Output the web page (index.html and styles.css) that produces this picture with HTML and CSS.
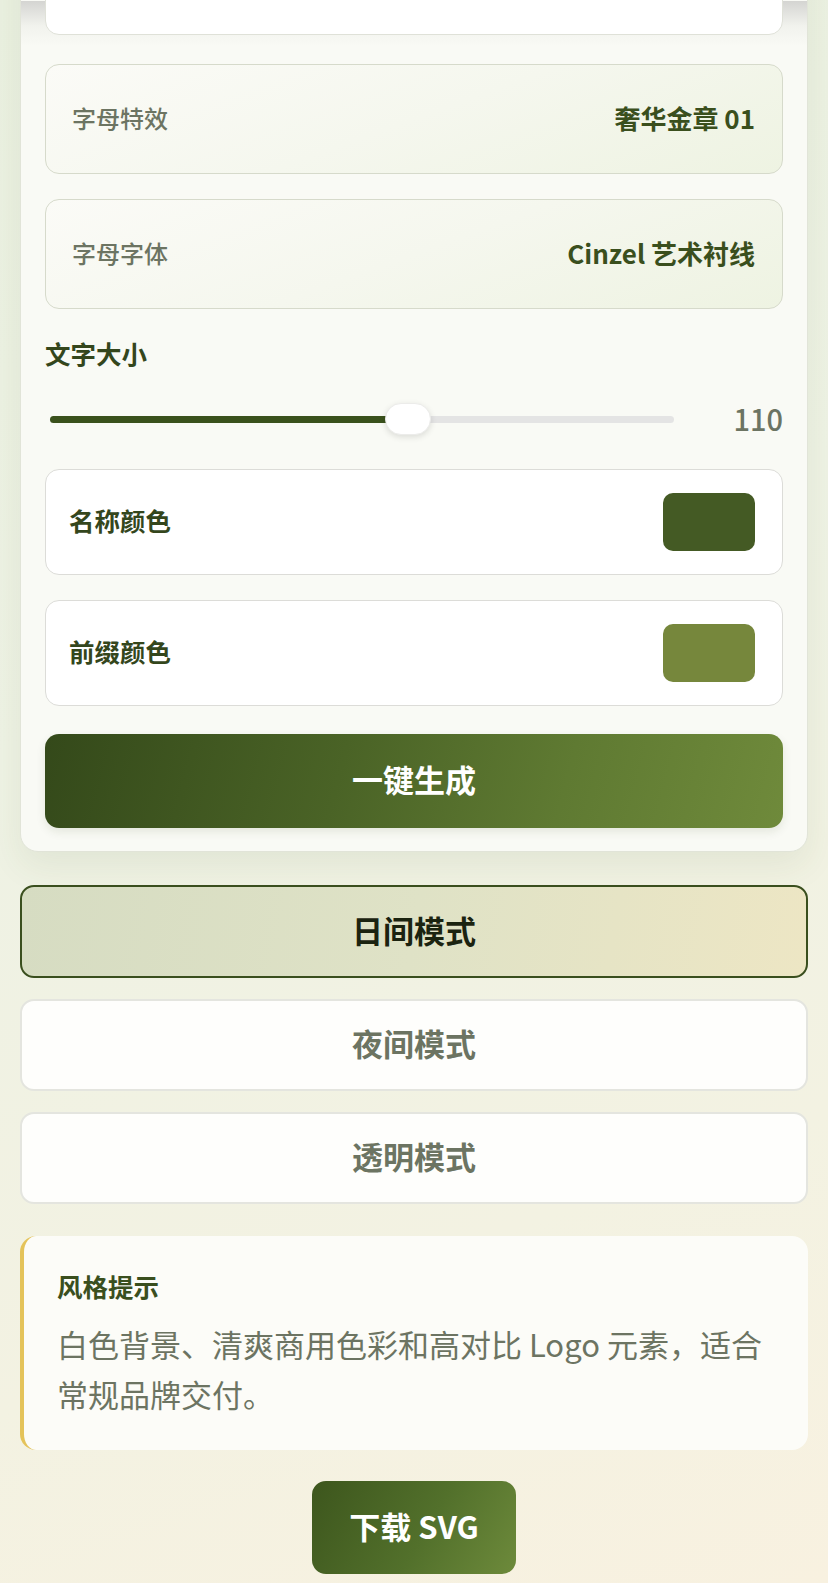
FILE: index.html
```html
<!DOCTYPE html>
<html lang="zh-CN">
<head>
<meta charset="utf-8">
<title>Logo 生成器</title>
<link rel="stylesheet" href="styles.css">
</head>
<body>
<main class="page">
  <section class="panel">
    <div class="field field-plain field-top"></div>
    <div class="field field-tint gap-29">
      <span class="field-label">字母特效</span>
      <span class="field-value">奢华金章 01</span>
    </div>
    <div class="field field-tint gap-25">
      <span class="field-label">字母字体</span>
      <span class="field-value">Cinzel 艺术衬线</span>
    </div>
    <div class="size-label">文字大小</div>
    <div class="slider-row">
      <div class="slider">
        <div class="slider-track"></div>
        <div class="slider-fill" style="width: 57.3%"></div>
        <div class="slider-thumb" style="left: 57.3%"></div>
      </div>
      <span class="slider-value">110</span>
    </div>
    <div class="color-row gap-30">
      <span class="color-label">名称颜色</span>
      <span class="swatch swatch-dark"></span>
    </div>
    <div class="color-row gap-25">
      <span class="color-label">前缀颜色</span>
      <span class="swatch swatch-light"></span>
    </div>
    <button class="generate">一键生成</button>
  </section>

  <div class="modes">
    <button class="mode mode-active">日间模式</button>
    <button class="mode">夜间模式</button>
    <button class="mode">透明模式</button>
  </div>

  <aside class="hint">
    <h3 class="hint-title">风格提示</h3>
    <p class="hint-text">白色背景、清爽商用色彩和高对比 Logo 元素，适合常规品牌交付。</p>
  </aside>

  <div class="download-wrap">
    <button class="download">下载 SVG</button>
  </div>
</main>
</body>
</html>
```

FILE: styles.css
```css
* { box-sizing: border-box; }

html, body {
  margin: 0;
  padding: 0;
}

body {
  width: 828px;
  height: 1583px;
  overflow: hidden;
  font-family: "Noto Sans CJK SC", "Noto Sans", sans-serif;
  background: linear-gradient(160deg, #eaf0e0 0%, #eef2e4 40%, #f3f2e2 75%, #f8f1e0 100%);
}

.page {
  padding: 0 20px;
  display: flex;
  flex-direction: column;
}

.panel {
  margin-top: -100px;
  background:
    linear-gradient(to bottom, rgba(255,255,255,0) 0px, rgba(255,255,255,0) 100px, rgba(200,200,198,0.75) 100px, rgba(230,231,226,0.4) 125px, rgba(255,255,255,0) 145px),
    #f9faf5;
  border: 1px solid #e1e4d8;
  border-radius: 18px;
  padding: 24px 24px 23px;
  display: flex;
  flex-direction: column;
  box-shadow: 0 14px 34px rgba(70, 90, 40, 0.08);
}

.gap-25 { margin-top: 25px; }
.gap-29 { margin-top: 29px; }
.gap-30 { margin-top: 30px; }

.field {
  height: 110px;
  border-radius: 14px;
  border: 1.5px solid #d6dacb;
  display: flex;
  align-items: center;
  justify-content: space-between;
  padding: 0 27px 4px 26px;
}

.field-plain {
  background: #ffffff;
  border-color: #dfe1d8;
}

.field-tint {
  background: linear-gradient(160deg, #fbfbf7 0%, #f5f7ee 50%, #eef3e2 100%);
}

.field-label {
  font-size: 24px;
  color: #6c7462;
  font-weight: 500;
}

.field-value {
  font-size: 26px;
  font-weight: 600;
  color: #3a4f1d;
}

.size-label {
  margin-top: 27px;
  font-size: 25.5px;
  line-height: 34px;
  font-weight: 600;
  color: #34461c;
}

.slider-row {
  margin-top: 29px;
  height: 40px;
  display: flex;
  align-items: center;
}

.slider {
  position: relative;
  flex: 1;
  height: 40px;
  margin-left: 5px;
}

.slider-track {
  position: absolute;
  left: 0;
  right: 0;
  top: 17px;
  height: 7px;
  border-radius: 4px;
  background: #e4e4e4;
}

.slider-fill {
  position: absolute;
  left: 0;
  top: 17px;
  height: 7px;
  border-radius: 4px;
  background: #3a511c;
}

.slider-thumb {
  position: absolute;
  top: 4px;
  width: 46px;
  height: 32px;
  margin-left: -23px;
  border-radius: 16px;
  background: #ffffff;
  border: 1px solid #ececea;
  box-shadow: 0 2px 6px rgba(0, 0, 0, 0.12);
}

.slider-value {
  width: 109px;
  text-align: right;
  font-size: 29px;
  font-weight: 500;
  color: #6c7462;
  padding-bottom: 3px;
}

.color-row {
  height: 106px;
  background: #ffffff;
  border: 1.5px solid #dcdcd8;
  border-radius: 14px;
  display: flex;
  align-items: center;
  justify-content: space-between;
  padding: 0 27px 0 23px;
}

.color-label {
  font-size: 25.5px;
  font-weight: 600;
  color: #34461c;
  padding-bottom: 5px;
}

.swatch {
  width: 92px;
  height: 58px;
  border-radius: 10px;
}

.swatch-dark { background: #445a24; }
.swatch-light { background: #76873c; }

.generate {
  margin-top: 28px;
  height: 94px;
  border: none;
  border-radius: 14px;
  padding-bottom: 6px;
  background: linear-gradient(105deg, #34491a 0%, #4a6326 40%, #5f7a32 70%, #6f8a3b 100%);
  color: #ffffff;
  font-family: inherit;
  font-size: 31px;
  font-weight: 600;
  box-shadow: 0 4px 10px rgba(50, 70, 20, 0.1);
}

.modes {
  margin-top: 33px;
  display: flex;
  flex-direction: column;
  gap: 21px;
}

.mode {
  height: 92px;
  border-radius: 14px;
  border: 2px solid #e4e5df;
  padding-bottom: 6px;
  background: #fefefc;
  color: #6c7462;
  font-family: inherit;
  font-size: 31px;
  font-weight: 600;
}

.mode-active {
  height: 93px;
  border: 2px solid #3a4f1e;
  background: linear-gradient(100deg, #d6dcc2 0%, #dfe2c6 50%, #ede6c4 100%);
  color: #1b2310;
}

.hint {
  margin-top: 32px;
  height: 214px;
  background: #fcfcf8;
  border-left: 4px solid #e4c35a;
  border-radius: 16px;
  padding: 33px 32px 0 33px;
}

.hint-title {
  margin: 0;
  font-size: 25.5px;
  line-height: 34px;
  font-weight: 600;
  color: #3a4f1e;
}

.hint-text {
  margin: 16px 0 0;
  font-size: 31px;
  line-height: 50px;
  color: #6c7462;
}

.download-wrap {
  margin-top: 31px;
  display: flex;
  justify-content: center;
}

.download {
  width: 204px;
  height: 93px;
  border: none;
  border-radius: 14px;
  padding-bottom: 6px;
  background: linear-gradient(120deg, #3d561d 0%, #52702b 55%, #6d8a3b 100%);
  color: #ffffff;
  font-family: inherit;
  font-size: 31px;
  font-weight: 600;
}
```
